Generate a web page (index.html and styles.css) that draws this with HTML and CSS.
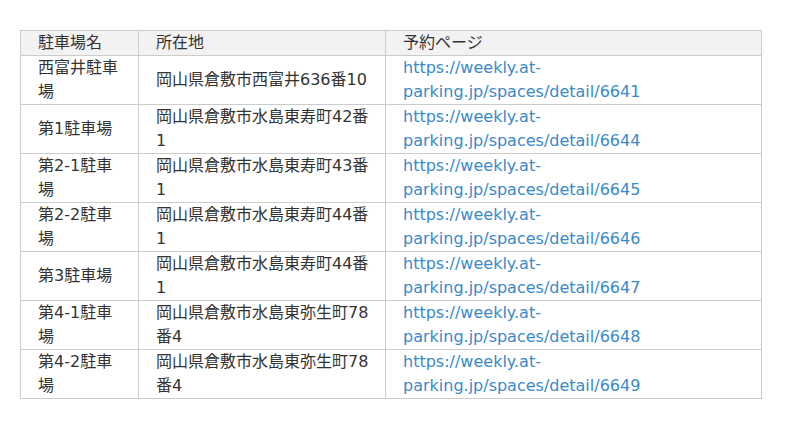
FILE: index.html
```html
<!DOCTYPE html>
<html lang="ja">
<head>
    <meta charset="UTF-8">
    <title>駐車場一覧</title>
    <link rel="stylesheet" href="styles.css">
</head>
<body>
    <table class="parking-table">
        <colgroup>
            <col class="col-name">
            <col class="col-address">
            <col class="col-link">
        </colgroup>
        <thead>
            <tr>
                <th>駐車場名</th>
                <th>所在地</th>
                <th>予約ページ</th>
            </tr>
        </thead>
        <tbody>
            <tr>
                <td>西富井駐車場</td>
                <td>岡山県倉敷市西富井636番10</td>
                <td><a href="https://weekly.at-parking.jp/spaces/detail/6641">https://weekly.at-parking.jp/spaces/detail/6641</a></td>
            </tr>
            <tr>
                <td>第1駐車場</td>
                <td>岡山県倉敷市水島東寿町42番1</td>
                <td><a href="https://weekly.at-parking.jp/spaces/detail/6644">https://weekly.at-parking.jp/spaces/detail/6644</a></td>
            </tr>
            <tr>
                <td>第2-1駐車場</td>
                <td>岡山県倉敷市水島東寿町43番1</td>
                <td><a href="https://weekly.at-parking.jp/spaces/detail/6645">https://weekly.at-parking.jp/spaces/detail/6645</a></td>
            </tr>
            <tr>
                <td>第2-2駐車場</td>
                <td>岡山県倉敷市水島東寿町44番1</td>
                <td><a href="https://weekly.at-parking.jp/spaces/detail/6646">https://weekly.at-parking.jp/spaces/detail/6646</a></td>
            </tr>
            <tr>
                <td>第3駐車場</td>
                <td>岡山県倉敷市水島東寿町44番1</td>
                <td><a href="https://weekly.at-parking.jp/spaces/detail/6647">https://weekly.at-parking.jp/spaces/detail/6647</a></td>
            </tr>
            <tr>
                <td>第4-1駐車場</td>
                <td>岡山県倉敷市水島東弥生町78番4</td>
                <td><a href="https://weekly.at-parking.jp/spaces/detail/6648">https://weekly.at-parking.jp/spaces/detail/6648</a></td>
            </tr>
            <tr>
                <td>第4-2駐車場</td>
                <td>岡山県倉敷市水島東弥生町78番4</td>
                <td><a href="https://weekly.at-parking.jp/spaces/detail/6649">https://weekly.at-parking.jp/spaces/detail/6649</a></td>
            </tr>
        </tbody>
    </table>
</body>
</html>
```

FILE: styles.css
```css
body {
    margin: 0;
    padding: 30px 20px;
    background-color: #fff;
    color: #333;
    font-family: "DejaVu Sans", "Noto Sans CJK JP", sans-serif;
    font-size: 16px;
    line-height: 24px;
}
.parking-table {
    width: 742px;
    border-collapse: collapse;
    table-layout: fixed;
}
.col-name {
    width: 118px;
}
.col-address {
    width: 247px;
}
.parking-table th,
.parking-table td {
    border: 1px solid #ccc;
    padding: 0 13px 0 17px;
    text-align: left;
    vertical-align: middle;
    word-break: break-word;
}
.parking-table th {
    background-color: #f2f2f2;
    font-weight: normal;
}
.parking-table a {
    color: #3a89c9;
    text-decoration: none;
}
```
